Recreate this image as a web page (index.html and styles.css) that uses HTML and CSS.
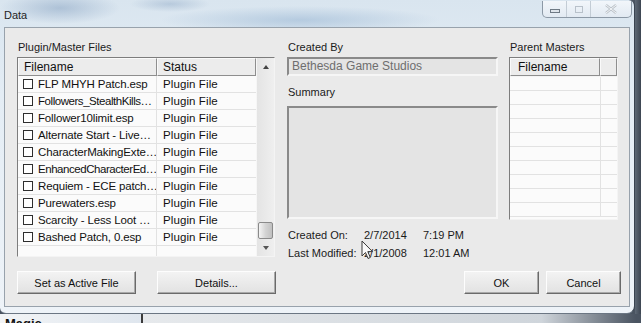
FILE: index.html
```html
<!DOCTYPE html>
<html lang="en">
<head>
  <meta charset="UTF-8" />
  <title>Data</title>
  <link rel="stylesheet" href="styles.css">
</head>
<body>

  <div class="desk">
    <div class="window">
      <div class="titlebar">
        <span class="title">Data</span>
        <div class="caption-btns">
          <span class="cb min"><i></i></span>
          <span class="cb max"><i></i></span>
          <span class="cb close">
            <svg width="12" height="10" viewBox="0 0 12 10"><path d="M1 1 L11 9 M11 1 L1 9" stroke="#b9c0c7" stroke-width="2.4" fill="none"/><path d="M1 1 L11 9 M11 1 L1 9" stroke="#f4f6f8" stroke-width="1" fill="none"/></svg>
          </span>
        </div>
      </div>

      <div class="client">
        <div class="panes">

          <section class="pane-files">
            <div class="label">Plugin/Master Files</div>
            <div class="listview files">
              <div class="lv-main">
                <div class="lv-head">
                  <span class="hcell c-name">Filename</span>
                  <span class="hcell c-status">Status</span>
                </div>
                <div class="lv-row"><span class="c-name"><b class="chk"></b>FLP MHYH Patch.esp</span><span class="c-status">Plugin File</span></div>
                <div class="lv-row"><span class="c-name tight"><b class="chk"></b>Followers_StealthKills…</span><span class="c-status">Plugin File</span></div>
                <div class="lv-row"><span class="c-name"><b class="chk"></b>Follower10limit.esp</span><span class="c-status">Plugin File</span></div>
                <div class="lv-row"><span class="c-name"><b class="chk"></b>Alternate Start - Live…</span><span class="c-status">Plugin File</span></div>
                <div class="lv-row"><span class="c-name"><b class="chk"></b>CharacterMakingExte…</span><span class="c-status">Plugin File</span></div>
                <div class="lv-row"><span class="c-name tight"><b class="chk"></b>EnhancedCharacterEd…</span><span class="c-status">Plugin File</span></div>
                <div class="lv-row"><span class="c-name"><b class="chk"></b>Requiem - ECE patch…</span><span class="c-status">Plugin File</span></div>
                <div class="lv-row"><span class="c-name"><b class="chk"></b>Purewaters.esp</span><span class="c-status">Plugin File</span></div>
                <div class="lv-row"><span class="c-name"><b class="chk"></b>Scarcity - Less Loot …</span><span class="c-status">Plugin File</span></div>
                <div class="lv-row"><span class="c-name"><b class="chk"></b>Bashed Patch, 0.esp</span><span class="c-status">Plugin File</span></div>
                <div class="lv-row empty"><span class="c-name"></span><span class="c-status"></span></div>
              </div>
              <div class="vscroll">
                <span class="arrow up"></span>
                <span class="track"><span class="thumb"></span></span>
                <span class="arrow down"></span>
              </div>
            </div>
          </section>

          <section class="pane-info">
            <div class="label">Created By</div>
            <div class="textbox">Bethesda Game Studios</div>
            <div class="label summary-label">Summary</div>
            <div class="textbox summary"></div>
            <div class="dates">
              <span>Created On:</span><span>2/7/2014</span><span>7:19 PM</span>
              <span>Last Modified:</span><span>2/1/2008</span><span>12:01 AM</span>
            </div>
          </section>

          <section class="pane-masters">
            <div class="label">Parent Masters</div>
            <div class="listview masters">
              <div class="lv-head">
                <span class="hcell m-name">Filename</span>
                <span class="hcell m-rest"></span>
              </div>
              <div class="m-row"><span></span><span></span></div>
              <div class="m-row"><span></span><span></span></div>
              <div class="m-row"><span></span><span></span></div>
              <div class="m-row"><span></span><span></span></div>
              <div class="m-row"><span></span><span></span></div>
              <div class="m-row"><span></span><span></span></div>
              <div class="m-row"><span></span><span></span></div>
              <div class="m-row"><span></span><span></span></div>
              <div class="m-row"><span></span><span></span></div>
              <div class="m-row"><span></span><span></span></div>
            </div>
          </section>

        </div>

        <div class="buttons">
          <button class="btn wide">Set as Active File</button>
          <button class="btn wide details">Details...</button>
          <button class="btn ok">OK</button>
          <button class="btn cancel">Cancel</button>
        </div>
      </div>
    </div>
    <div class="side"></div>
  </div>

  <div class="below">
    <div class="below-left">Magic</div>
    <div class="below-right"></div>
  </div>

  <svg class="cursor" width="13" height="21" viewBox="0 0 13 21">
    <path d="M1 1 L1 16 L4.5 12.5 L7 18.5 L9.3 17.5 L6.8 11.6 L11.5 11.6 Z" fill="#fafafa" stroke="#3a3a3a" stroke-width="1" stroke-linejoin="round"/>
  </svg>

</body>
</html>
```

FILE: styles.css
```css
html, body {
  margin: 0;
  padding: 0;
}

body {
  width: 641px;
  height: 323px;
  overflow: hidden;
  background: #4a5461;
  font-family: "Liberation Sans", Arial, sans-serif;
  color: #111;
}

.desk {
  display: flex;
  height: 314px;
}

.window {
  width: 635px;
  height: 314px;
  box-sizing: border-box;
  display: flex;
  flex-direction: column;
  padding: 0 4px 6px 4px;
  border-right: 1px solid #394350;
  border-bottom: 1px solid #6b7683;
  border-radius: 0 6px 8px 6px;
  background:
    radial-gradient(ellipse 140px 14px at 300px 20px, rgba(150,180,210,0.55), transparent),
    radial-gradient(ellipse 60px 16px at 60px 8px, rgba(120,150,185,0.45), transparent),
    radial-gradient(ellipse 40px 8px at 170px 4px, rgba(120,150,185,0.35), transparent),
    linear-gradient(to bottom, #d9e5ef 0%, #e4edf5 30%, #eef3f8 100%);
}

.side {
  flex: 1;
  background: linear-gradient(to right, #5d6875, #3d4652);
}

/* title bar */

.titlebar {
  height: 27px;
  display: flex;
  align-items: flex-start;
  flex-shrink: 0;
}

.title {
  font-size: 11px;
  color: #1e1e1e;
  margin-top: 9px;
}

.caption-btns {
  margin-left: auto;
  margin-right: -2px;
  margin-top: 1px;
  height: 16px;
  display: flex;
  border: 1px solid #8c99a6;
  border-top: none;
  border-radius: 0 0 5px 5px;
  background: linear-gradient(to bottom, #f2f6fa, #e2eaf2);
}

.cb {
  display: flex;
  align-items: center;
  justify-content: center;
}

.cb.min, .cb.max {
  width: 23px;
  border-right: 1px solid #c3ccd5;
}

.cb.min i {
  width: 8px;
  height: 2px;
  border: 1px solid #6f7a85;
  background: #dfe5eb;
  margin-top: 3px;
}

.cb.max i {
  width: 6px;
  height: 5px;
  border: 1px solid #b8c1ca;
}

.cb.close {
  width: 40px;
}

/* client area */

.client {
  flex: 1;
  display: flex;
  flex-direction: column;
  background: #eaeaea;
  border: 1px solid #98a2ac;
  padding: 13px 10px 12px 12px;
}

.panes {
  display: flex;
  height: 216px;
}

.label {
  font-size: 11px;
  line-height: 13px;
  color: #1a1a1a;
  margin-bottom: 3px;
  padding-left: 1px;
}

.pane-files {
  width: 258px;
}

.pane-info {
  width: 211px;
  margin-left: 12px;
}

.pane-masters {
  width: 109px;
  margin-left: 11px;
}

/* list views */

.listview {
  box-sizing: border-box;
  background: #fbfbfb;
  border: 1px solid;
  border-color: #7d7d7d #f4f4f4 #f4f4f4 #7d7d7d;
  overflow: hidden;
}

.files {
  height: 200px;
  display: flex;
}

.lv-main {
  flex: 1;
  overflow: hidden;
}

.lv-head {
  display: flex;
  height: 18px;
  font-size: 12px;
}

.hcell {
  box-sizing: border-box;
  background: #ececec;
  border: 1px solid #8e8e8e;
  border-left-color: #fafafa;
  border-top-color: #fafafa;
  line-height: 16px;
  padding-left: 5px;
}

.c-name {
  width: 139px;
  flex-shrink: 0;
}

.c-status {
  flex: 1;
}

.lv-row {
  display: flex;
  height: 17px;
  font-size: 11.5px;
  letter-spacing: -0.15px;
  line-height: 17px;
  box-sizing: border-box;
  border-bottom: 1px solid #e2e2e2;
}

.lv-row span {
  white-space: nowrap;
  overflow: hidden;
  box-sizing: border-box;
}

.lv-row .c-name {
  display: flex;
  align-items: center;
  padding-left: 5px;
  border-right: 1px solid #e2e2e2;
  color: #111;
}

.lv-row .c-name.tight {
  letter-spacing: -0.45px;
}

.lv-row .c-status {
  padding-left: 6px;
  letter-spacing: 0.1px;
}

.lv-row.empty {
  border-bottom: none;
}

.chk {
  width: 8px;
  height: 8px;
  border: 1px solid #2e2e2e;
  background: #fff;
  margin-right: 5px;
  flex-shrink: 0;
}

.vscroll {
  width: 17px;
  display: flex;
  flex-direction: column;
  background: linear-gradient(to right, #e4e4e4, #efefef);
  border-left: 1px solid #f6f6f6;
}

.arrow {
  height: 17px;
  display: flex;
  justify-content: center;
  align-items: center;
}

.arrow.up::before,
.arrow.down::before {
  content: "";
  border-left: 3px solid transparent;
  border-right: 3px solid transparent;
}

.arrow.up::before {
  border-bottom: 4px solid #444;
}

.arrow.down::before {
  border-top: 4px solid #555;
}

.track {
  flex: 1;
  display: flex;
  flex-direction: column;
  justify-content: flex-end;
}

.thumb {
  height: 15px;
  margin: 0 1px;
  border: 1px solid #8a8a8a;
  border-radius: 2px;
  background: linear-gradient(to right, #f4f4f4, #d4d4d4 50%, #c0c0c0);
}

/* info pane */

.textbox {
  box-sizing: border-box;
  height: 19px;
  border: 2px solid;
  border-color: #8a8a8a #f6f6f6 #f6f6f6 #8a8a8a;
  background: #e4e4e4;
  font-size: 12px;
  line-height: 15px;
  color: #6e6e6e;
  padding-left: 3px;
}

.summary-label {
  margin-top: 10px;
  margin-bottom: 7px;
}

.textbox.summary {
  height: 113px;
}

.dates {
  margin-top: 7px;
  display: grid;
  grid-template-columns: 76px 59px auto;
  font-size: 11px;
  line-height: 18px;
  padding-left: 1px;
  color: #1a1a1a;
}

/* masters pane */

.masters {
  height: 163px;
}

.m-name {
  width: 90px;
  padding-left: 7px;
}

.m-rest {
  flex: 1;
}

.masters .lv-head {
  height: 18px;
  border-bottom: 1px solid #f4f4f4;
}

.m-row {
  display: flex;
  height: 14px;
  box-sizing: border-box;
  border-bottom: 1px solid #e2e2e2;
}

.m-row span:first-child {
  width: 90px;
  border-right: 1px solid #e2e2e2;
}

/* buttons */

.buttons {
  margin-top: 14px;
  display: flex;
}

.btn {
  height: 23px;
  box-sizing: border-box;
  font-family: inherit;
  font-size: 11px;
  color: #111;
  background: linear-gradient(to bottom, #f3f3f3, #e2e2e2);
  border: 1px solid;
  border-color: #fdfdfd #6a6a6a #6a6a6a #fdfdfd;
  box-shadow: inset -1px -1px 0 #a9a9a9;
  padding: 0;
}

.btn.wide {
  width: 119px;
}

.btn.details {
  margin-left: 21px;
}

.btn.ok {
  width: 75px;
  margin-left: auto;
}

.btn.cancel {
  width: 75px;
  margin-left: 7px;
  margin-right: -2px;
}

/* background behind the dialog */

.below {
  display: flex;
  height: 9px;
}

.below-left {
  width: 143px;
  border-right: 2px solid #3b3b3b;
  background: linear-gradient(to right, #f2f4f6, #dfe6ee);
  font-weight: bold;
  font-size: 13px;
  line-height: 13px;
  padding-left: 5px;
  box-sizing: border-box;
  padding-top: 3px;
}

.below-right {
  flex: 1;
  background: linear-gradient(to right, #e6e9ec, #cfd5db 80%, #4a5461 99%);
}

.cursor {
  position: absolute;
  left: 361px;
  top: 240px;
}
```
